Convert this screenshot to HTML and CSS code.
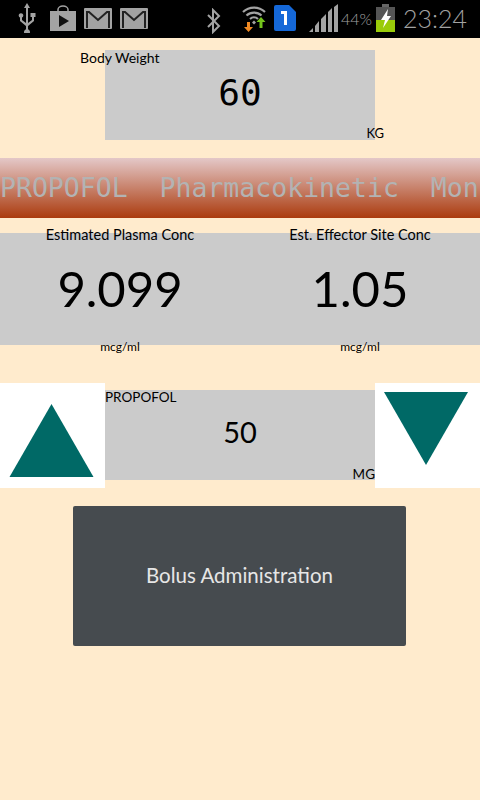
FILE: index.html
```html
<!DOCTYPE html>
<html lang="en">
<head>
    <meta charset="UTF-8">
    <meta name="viewport" content="width=device-width, initial-scale=1.0">
    <title>Propofol Pharmacokinetic Monitor</title>
    <link rel="stylesheet" href="styles.css">
</head>
<body>
    <div class="status-bar">
        <svg class="ico-usb" width="20" height="30" viewBox="0 0 20 30" fill="#a3a3a3">
            <path d="M10 0l3 5h-2v15l4-3v-3h-1.500v-4h5v4H17v4l-6 5v3.200a3 3 0 1 1-2 0V23l-6-5v-3.500a2.300 2.300 0 1 1 2 0V17l4 3V5H7z"/>
        </svg>
        <svg class="ico-play" width="26" height="26" viewBox="0 0 26 26">
            <path d="M8 7V4.500a5 3.500 0 0 1 10 0V7" fill="none" stroke="#a3a3a3" stroke-width="1.500"/>
            <rect x="0" y="6" width="26" height="20" fill="#a3a3a3"/>
            <path d="M9 10l10 6-10 6z" fill="#111"/>
        </svg>
        <svg class="ico-mail" width="28" height="21" viewBox="0 0 28 21">
            <rect width="28" height="21" rx="1" fill="#a3a3a3"/>
            <path d="M3 20V4h2l9 8 9-8h2v16" fill="none" stroke="#222" stroke-width="2"/>
        </svg>
        <svg class="ico-mail" width="28" height="21" viewBox="0 0 28 21">
            <rect width="28" height="21" rx="1" fill="#a3a3a3"/>
            <path d="M3 20V4h2l9 8 9-8h2v16" fill="none" stroke="#222" stroke-width="2"/>
        </svg>
        <svg class="ico-bt" width="14" height="26" viewBox="0 0 14 26">
            <path d="M1 7l11 11-6 6V2l6 6L1 19" fill="none" stroke="#a3a3a3" stroke-width="2"/>
        </svg>
        <svg class="ico-wifi" width="26" height="28" viewBox="0 0 26 28">
            <path d="M2 8a16 16 0 0 1 22 0M5.500 11.500a11 11 0 0 1 15 0M9 15a6 6 0 0 1 8 0" fill="none" stroke="#a3a3a3" stroke-width="2.200"/>
            <path d="M13 16.500l2 2-2 2-2-2z" fill="#a3a3a3"/>
            <path d="M6 18h3v5h3l-4.500 5L3 23h3z" fill="#f08a24"/>
            <path d="M20 13l4.500 5h-3v6h-3v-6h-3z" fill="#74c41c"/>
        </svg>
        <svg class="ico-sim" width="22" height="26" viewBox="0 0 22 26">
            <path d="M2 0h13l7 7v17a2 2 0 0 1-2 2H2a2 2 0 0 1-2-2V2a2 2 0 0 1 2-2z" fill="#1568d8"/>
            <path d="M7 6h6v14h-3V9H7z" fill="#fff"/>
        </svg>
        <svg class="ico-signal" width="29" height="28" viewBox="0 0 29 28" fill="#a3a3a3">
            <path d="M0 28l4-4v4zM6 28v-6l4-5v11zM12 28V15l5-5v18zM19 28V8l4-4v24zM25 28V3l4-3v28z"/>
        </svg>
        <span class="battery-pct">44%</span>
        <svg class="ico-batt" width="19" height="28" viewBox="0 0 19 28">
            <rect x="6" y="0" width="7" height="3" fill="#666"/>
            <rect x="0" y="3" width="19" height="25" fill="#555"/>
            <rect x="0" y="16" width="19" height="12" fill="#9acb0a"/>
            <path d="M12 5l-7 11h4l-2 8 8-12h-4z" fill="#fff"/>
        </svg>
        <span class="clock">23:24</span>
    </div>

    <div class="weight-row">
        <div class="weight-box">
            <span class="hand-label weight-label">Body Weight</span>
            <span class="weight-value">60</span>
            <span class="hand-label weight-unit">KG</span>
        </div>
    </div>

    <div class="banner">
        <span class="banner-text">PROPOFOL  Pharmacokinetic  Mon</span>
    </div>

    <div class="conc-row">
        <div class="conc-col">
            <span class="hand-label conc-label">Estimated Plasma Conc</span>
            <span class="conc-value">9.099</span>
            <span class="hand-label conc-unit">mcg/ml</span>
        </div>
        <div class="conc-col">
            <span class="hand-label conc-label">Est. Effector Site Conc</span>
            <span class="conc-value">1.05</span>
            <span class="hand-label conc-unit">mcg/ml</span>
        </div>
    </div>

    <div class="dose-row">
        <div class="arrow-btn">
            <svg width="105" height="105" viewBox="0 0 105 105">
                <path d="M51.500 21L93.500 94H9.500z" fill="#006966"/>
            </svg>
        </div>
        <div class="dose-box">
            <span class="hand-label dose-label">PROPOFOL</span>
            <span class="dose-value">50</span>
            <span class="hand-label dose-unit">MG</span>
        </div>
        <div class="arrow-btn">
            <svg width="105" height="105" viewBox="0 0 105 105">
                <path d="M9 9h84L51 82z" fill="#006966"/>
            </svg>
        </div>
    </div>

    <div class="bolus-btn">Bolus Administration</div>
</body>
</html>
```

FILE: styles.css
```css
* {
    margin: 0;
    padding: 0;
    box-sizing: border-box;
}

body {
    background-color: #ffebcd;
    color: #000;
    font-family: 'Lato', 'Noto Sans', sans-serif;
    height: 800px;
    overflow: hidden;
}

/* status bar */
.status-bar {
    display: flex;
    align-items: center;
    height: 38px;
    padding-bottom: 2px;
    background-color: #000;
    color: #a3a3a3;
}

.ico-usb { margin-left: 17px; }
.ico-play { margin-left: 13px; }
.ico-mail { margin-left: 8px; }
.ico-bt { margin-left: 59px; margin-top: 6px; }
.ico-wifi { margin-left: 20px; }
.ico-sim { margin-left: 7px; }
.ico-signal { margin-left: 13px; }

.battery-pct {
    margin-left: 3px;
    width: 32px;
    font-size: 16px;
    font-weight: 300;
    white-space: nowrap;
}

.ico-batt { margin-left: 3px; }

.clock {
    margin-left: 8px;
    font-size: 25px;
    font-weight: 300;
    white-space: nowrap;
}

/* body weight */
.weight-row {
    display: flex;
    justify-content: center;
    padding-top: 12px;
}

.weight-box {
    position: relative;
    display: flex;
    align-items: center;
    justify-content: center;
    width: 270px;
    height: 90px;
    background-color: #cbcbcb;
}

.hand-label {
    font-size: 14px;
    line-height: 16px;
    white-space: nowrap;
}

.weight-label {
    position: absolute;
    left: -25px;
    top: 0;
}

.weight-unit {
    position: absolute;
    right: -9px;
    bottom: -1px;
    font-size: 13px;
}

.weight-value {
    font-family: 'DejaVu Sans Mono', monospace;
    font-size: 36px;
    line-height: 40px;
    margin-bottom: 4px;
}

/* banner */
.banner {
    margin-top: 18px;
    height: 60px;
    line-height: 60px;
    overflow: hidden;
    background: linear-gradient(#e4c8c8, #ab3b0e);
}

.banner-text {
    font-family: 'DejaVu Sans Mono', monospace;
    font-size: 26.500px;
    color: #b3b3b3;
    white-space: pre;
}

/* concentrations */
.conc-row {
    display: flex;
    height: 112px;
    margin-top: 15px;
    background-color: #cbcbcb;
}

.conc-col {
    position: relative;
    flex: 1;
    display: flex;
    align-items: center;
    justify-content: center;
}

.conc-label {
    position: absolute;
    top: -6px;
    left: 0;
    right: 0;
    text-align: center;
    font-size: 14.500px;
}

.conc-unit {
    position: absolute;
    left: 0;
    right: 0;
    bottom: -10px;
    text-align: center;
    font-size: 12px;
}

.conc-value {
    font-size: 49px;
    line-height: 60px;
    margin-bottom: 2px;
}

/* dose */
.dose-row {
    display: flex;
    align-items: flex-start;
    height: 105px;
    margin-top: 38px;
}

.arrow-btn {
    width: 105px;
    height: 105px;
    background-color: #fff;
}

.arrow-btn svg {
    display: block;
}

.dose-box {
    position: relative;
    flex: 1;
    display: flex;
    align-items: center;
    justify-content: center;
    height: 90px;
    margin-top: 7px;
    background-color: #cbcbcb;
}

.dose-label {
    position: absolute;
    left: 0;
    top: -1px;
    font-size: 13.500px;
}

.dose-unit {
    position: absolute;
    right: 0;
    bottom: -2px;
    font-size: 13.500px;
}

.dose-value {
    font-size: 29px;
    line-height: 40px;
    margin-bottom: 6px;
}

/* bolus button */
.bolus-btn {
    display: flex;
    align-items: center;
    justify-content: center;
    width: 333px;
    height: 140px;
    margin: 18px 0 0 73px;
    padding-bottom: 3px;
    background-color: #464b4f;
    border-radius: 2px;
    color: #e6e6e6;
    font-size: 20.500px;
}
```
